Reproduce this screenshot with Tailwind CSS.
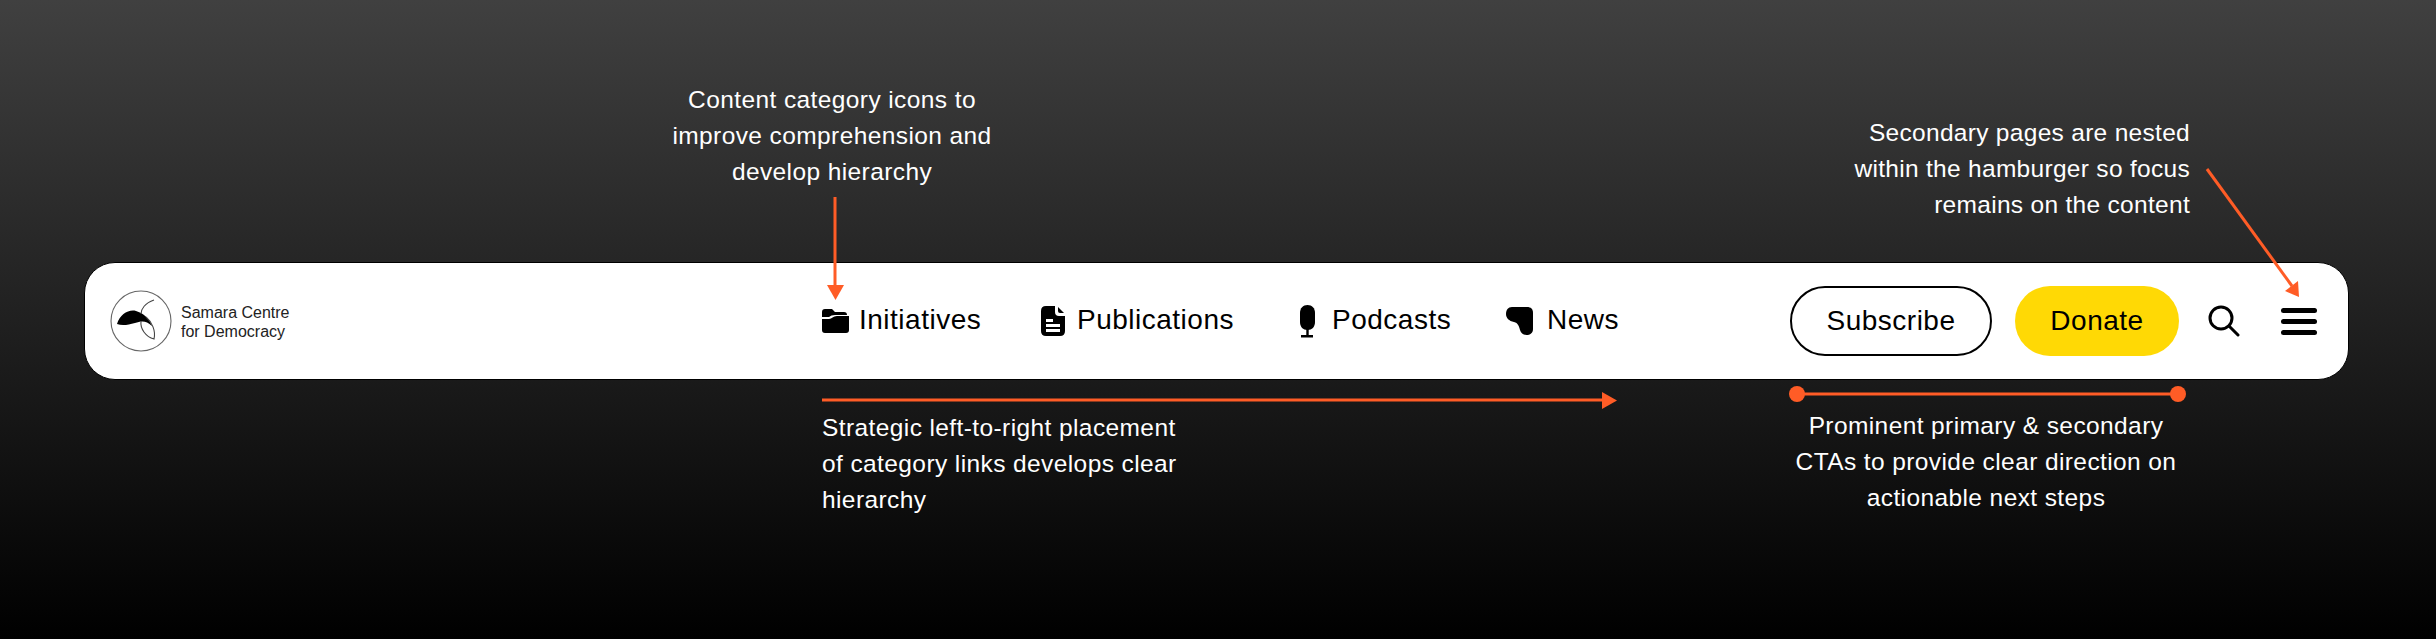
<!DOCTYPE html>
<html><head><meta charset="utf-8"><script src="https://cdn.jsdelivr.net/npm/@tailwindcss/browser@4"></script></head>
<body class="m-0">
<div class="relative w-[2436px] h-[639px] overflow-hidden bg-[linear-gradient(180deg,#404040_0%,#000000_100%)] font-['Liberation_Sans',Arial,sans-serif]">
  <div class="flex h-[262px] text-white text-[24.5px] leading-[36px] tracking-[0.4px]">
    <p class="w-[360px] ml-[652px] mt-[82px] text-center">Content category icons to<br>improve comprehension and<br>develop hierarchy</p>
    <p class="w-[400px] ml-[778px] mt-[115px] text-right tracking-[0.3px]">Secondary pages are nested<br>within the hamburger so focus<br>remains on the content</p>
  </div>
  <header class="flex items-center h-[118px] ml-[84px] mr-[87px] bg-white rounded-[31px] border border-black text-black">
    <div class="flex items-center w-[737px] pl-[25px] shrink-0">
      <svg width="62" height="62" viewBox="0 0 62 62" fill="none"><circle cx="31" cy="31" r="30" stroke="#666" stroke-width="1.1"/><path d="M7 34C10 24 19 19 26 21C33 23 39 28 42 36C36 30 31 31 25 33C18 35 12 36 7 34Z" fill="#000"/><path d="M44 10C35 13 31 19 31 24M31 31C30 39 36 47 44 49C46 41 42 32 36 27" stroke="#444" stroke-width="1.1"/></svg>
      <div class="ml-[9px] pt-[2px] text-[16px] leading-[19px] text-[#222]">Samara Centre<br>for Democracy</div>
    </div>
    <nav class="flex items-center text-[28px] leading-[36px] tracking-[0.5px]">
      <a class="flex items-center w-[219px]"><svg class="mr-[10px]" width="27" height="24" viewBox="0 0 27 24" fill="#000"><path d="M0 3Q0 0 3 0H10L13 3H22Q25 3 25 6H13Q9 6 7 8H0Z"/><path d="M0 10H7C10 10 11 7 15 7H27V21Q27 24 24 24H3Q0 24 0 21Z"/></svg><span class="pb-[2px]">Initiatives</span></a>
      <a class="flex items-center w-[259px]"><svg class="mr-[12px]" width="24" height="30" viewBox="0 0 24 30" fill="#000"><path fill-rule="evenodd" d="M5 0H14V6Q14 10 18 10H24V25Q24 30 19 30H5Q0 30 0 25V5Q0 0 5 0ZM5 13H12V16H5ZM5 18H19V21H5ZM5 23H19V26H5Z"/><path d="M17 1L23 7H19Q17 7 17 5Z"/></svg><span class="pb-[2px]">Publications</span></a>
      <a class="flex items-center w-[206px]"><svg class="mr-[17px]" width="15" height="33" viewBox="0 0 15 33" fill="#000"><path d="M7.5 0C12 0 15 3 15 8V17C15 22 12 25 7.5 25C3 25 0 22 0 17V8C0 3 3 0 7.5 0Z"/><path d="M6.3 24H8.7V30H13V32.5H1V30H6.3Z"/></svg><span class="pb-[2px]">Podcasts</span></a>
      <a class="flex items-center"><svg class="mr-[14px]" width="27" height="28" viewBox="0 0 27 28" fill="#000"><path d="M6 0H21C25 0 27 2 27 6V22C27 26 24 28 20.500 28C17 28 15 26 14 23C13 19 12 16 8 15C3 14 0 11 0 7C0 3 2 0 6 0Z"/></svg><span class="pb-[2px]">News</span></a>
    </nav>
    <div class="flex items-center ml-auto pr-[31px] text-[28px] tracking-[0.5px]">
      <button class="w-[202px] h-[70px] rounded-full border-2 border-black bg-white">Subscribe</button>
      <button class="w-[164px] h-[70px] ml-[23px] rounded-full bg-[#ffd905]">Donate</button>
      <svg class="ml-[29px]" width="32" height="32" viewBox="0 0 32 32" fill="none" stroke="#000" stroke-width="3"><circle cx="13" cy="13" r="11"/><path d="M21 21L30 30" stroke-linecap="round"/></svg>
      <div class="ml-[41px] flex flex-col gap-[6px] w-[36px]">
        <span class="block h-[5px] rounded-full bg-black"></span>
        <span class="block h-[5px] rounded-full bg-black"></span>
        <span class="block h-[5px] rounded-full bg-black"></span>
      </div>
    </div>
  </header>
  <div class="flex text-white text-[24.5px] leading-[36px] tracking-[0.4px]">
    <p class="w-[400px] ml-[822px] mt-[30px]">Strategic left-to-right placement<br>of category links develops clear<br>hierarchy</p>
    <p class="w-[460px] ml-[534px] mt-[28px] text-center">Prominent primary &amp; secondary<br>CTAs to provide clear direction on<br>actionable next steps</p>
  </div>
  <svg class="absolute inset-0" width="2436" height="639" viewBox="0 0 2436 639" fill="#ff5c26" stroke="none">
    <path d="M835 197V286" stroke="#ff5c26" stroke-width="3"/><path d="M827 285H844L835.500 300Z"/>
    <path d="M822 400H1604" stroke="#ff5c26" stroke-width="3"/><path d="M1602 392V409L1617 400.500Z"/>
    <path d="M1796 394H2178" stroke="#ff5c26" stroke-width="3"/><circle cx="1797" cy="394" r="8"/><circle cx="2178" cy="394" r="8"/>
    <path d="M2207 169L2292 286" stroke="#ff5c26" stroke-width="3"/><path d="M2285 291L2298 281L2299 297Z"/>
  </svg>
</div>
</body></html>
